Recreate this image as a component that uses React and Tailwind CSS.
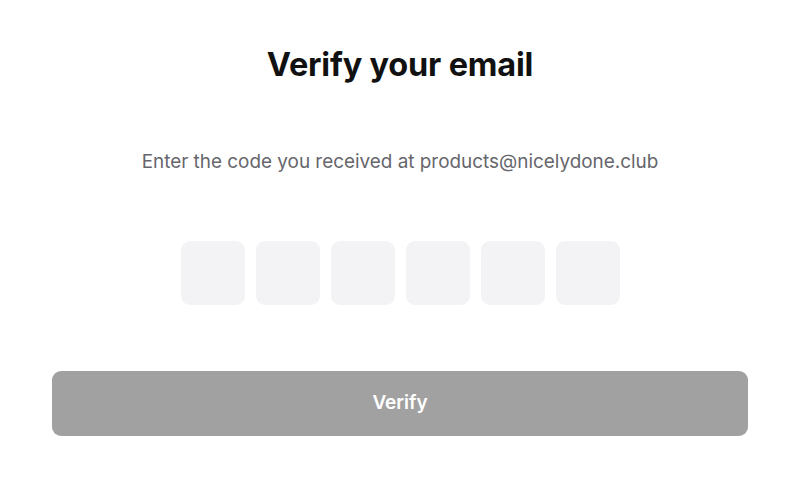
export default function App() {
  const boxes = [0, 1, 2, 3, 4, 5]
  return (
    <div className="w-[800px] h-[488px] bg-white flex flex-col items-center font-['Inter',sans-serif]">
      <h1 className="mt-[45px] text-[32.5px] leading-[40px] font-bold text-[#111111] tracking-[-0.2px]">
        Verify your email
      </h1>
      <p className="mt-[65px] text-[18.9px] leading-[24px] text-[#66666c]">
        Enter the code you received at products@nicelydone.club
      </p>
      <div className="mt-[67px] flex gap-[11px]">
        {boxes.map((i) => (
          <input
            key={i}
            type="text"
            maxLength={1}
            className="w-[64px] h-[64px] rounded-[9px] bg-[#f3f3f5] outline-none text-center text-2xl"
          />
        ))}
      </div>
      <button
        type="button"
        className="mt-[66px] w-[696px] h-[65px] rounded-[9px] bg-[#a1a1a1] text-white text-[19px] font-semibold"
      >
        Verify
      </button>
    </div>
  )
}
